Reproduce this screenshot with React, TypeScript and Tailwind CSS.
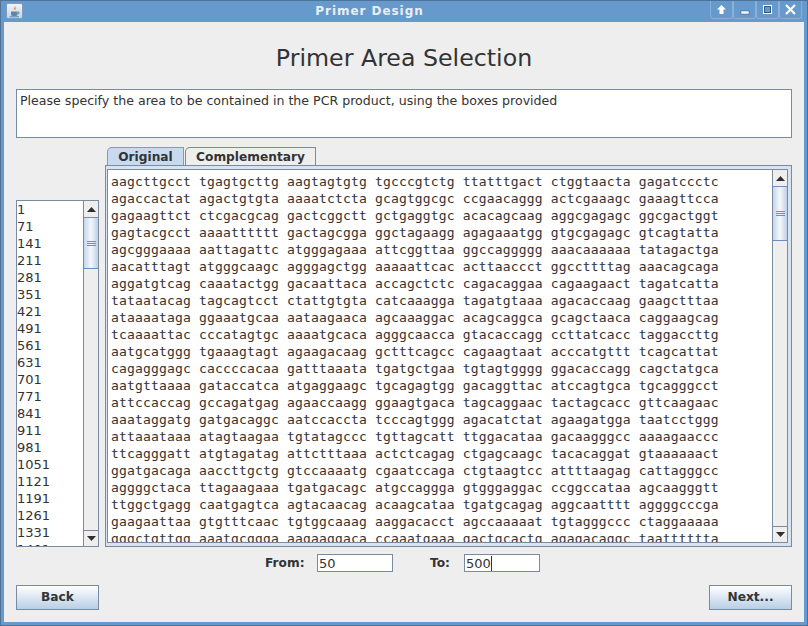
import React from "react";

const seq = `aagcttgcct tgagtgcttg aagtagtgtg tgcccgtctg ttatttgact ctggtaacta gagatccctc
agaccactat agactgtgta aaaatctcta gcagtggcgc ccgaacaggg actcgaaagc gaaagttcca
gagaagttct ctcgacgcag gactcggctt gctgaggtgc acacagcaag aggcgagagc ggcgactggt
gagtacgcct aaaatttttt gactagcgga ggctagaagg agagaaatgg gtgcgagagc gtcagtatta
agcgggaaaa aattagattc atgggagaaa attcggttaa ggccaggggg aaacaaaaaa tatagactga
aacatttagt atgggcaagc agggagctgg aaaaattcac acttaaccct ggccttttag aaacagcaga
aggatgtcag caaatactgg gacaattaca accagctctc cagacaggaa cagaagaact tagatcatta
tataatacag tagcagtcct ctattgtgta catcaaagga tagatgtaaa agacaccaag gaagctttaa
ataaaataga ggaaatgcaa aataagaaca agcaaaggac acagcaggca gcagctaaca caggaagcag
tcaaaattac cccatagtgc aaaatgcaca agggcaacca gtacaccagg ccttatcacc taggaccttg
aatgcatggg tgaaagtagt agaagacaag gctttcagcc cagaagtaat acccatgttt tcagcattat
cagagggagc caccccacaa gatttaaata tgatgctgaa tgtagtgggg ggacaccagg cagctatgca
aatgttaaaa gataccatca atgaggaagc tgcagagtgg gacaggttac atccagtgca tgcagggcct
attccaccag gccagatgag agaaccaagg ggaagtgaca tagcaggaac tactagcacc gttcaagaac
aaataggatg gatgacaggc aatccaccta tcccagtggg agacatctat agaagatgga taatcctggg
attaaataaa atagtaagaa tgtatagccc tgttagcatt ttggacataa gacaagggcc aaaagaaccc
ttcagggatt atgtagatag attctttaaa actctcagag ctgagcaagc tacacaggat gtaaaaaact
ggatgacaga aaccttgctg gtccaaaatg cgaatccaga ctgtaagtcc attttaagag cattagggcc
aggggctaca ttagaagaaa tgatgacagc atgccaggga gtgggaggac ccggccataa agcaagggtt
ttggctgagg caatgagtca agtacaacag acaagcataa tgatgcagag aggcaatttt aggggcccga
gaagaattaa gtgtttcaac tgtggcaaag aaggacacct agccaaaaat tgtagggccc ctaggaaaaa
gggctgttgg aaatgcggga aagaaggaca ccaaatgaaa gactgcactg agagacaggc taatttttta`.split("\n");

const nums = [1,71,141,211,281,351,421,491,561,631,701,771,841,911,981,1051,1121,1191,1261,1331,1401];

const Arrow = ({ up }: { up: boolean }) => (
  <svg width="9" height="5" viewBox="0 0 9 5" className="block">
    <path d={up ? "M4.5 0L9 5H0Z" : "M0 0H9L4.5 5Z"} fill="#2f2f2f" />
  </svg>
);

const Scrollbar = ({ thumbHeight }: { thumbHeight: string }) => (
  <div className="w-[15px] h-full shrink-0 flex flex-col bg-[#eeeeee] border-l border-[#7a8a9f]">
    <div className="h-[16px] shrink-0 flex items-center justify-center bg-[#eeeeee]">
      <Arrow up />
    </div>
    <div className="flex-1 min-h-0 flex flex-col">
      <div className={`${thumbHeight} shrink-0 border-y border-[#6b8fc4] bg-gradient-to-r from-[#c4d6ec] via-[#f5f8fc] to-[#bcd0e8] flex flex-col items-center justify-center gap-[1px]`}>
        <div className="w-[9px] h-[1px] bg-[#6d8fc4]" />
        <div className="w-[9px] h-[1px] bg-[#6d8fc4]" />
        <div className="w-[9px] h-[1px] bg-[#6d8fc4]" />
      </div>
    </div>
    <div className="h-[16px] shrink-0 flex items-center justify-center bg-[#eeeeee] border-t border-[#7a8a9f]">
      <Arrow up={false} />
    </div>
  </div>
);

const WinBtn = ({ children }: { children: React.ReactNode }) => (
  <div className="w-[23px] h-[18px] flex items-center justify-center border-x border-b border-[#88b0d8] rounded-b-[3px]">
    {children}
  </div>
);

const JavaIcon = () => (
  <div className="w-[17px] h-[16px] rounded-[2px] bg-gradient-to-b from-[#f2f4f6] to-[#c9d6e4] border border-[#7f9fc0] flex items-center justify-center">
    <svg width="13" height="14" viewBox="0 0 13 14">
      <path d="M7 1C8 3 5 4 6 6.5C6 5 8.5 4.5 7 1Z" fill="#e8772e" />
      <path d="M8.5 3.5C7 4.5 7 5.5 7.5 6.5C7.5 5.5 8 4.5 8.5 3.5Z" fill="#e8772e" />
      <path d="M3 7.5H9.5V10.5C9.5 11.5 8.5 12 6.25 12C4 12 3 11.5 3 10.5Z" fill="#5d87a8" />
      <path d="M9.5 8H11V9.5L9.5 10" fill="none" stroke="#5d87a8" />
      <path d="M1.5 12.8H11" stroke="#5d87a8" />
    </svg>
  </div>
);

const PrimaryButton = ({ label }: { label: string }) => (
  <div className="w-[83px] h-[25px] flex items-center justify-center border border-[#7a8a9f] bg-gradient-to-b from-[#ffffff] to-[#b8cfe5] text-[12.2px] font-bold text-[#333333]">
    {label}
  </div>
);

export default function App() {
  return (
    <div className="w-[808px] h-[626px] flex flex-col bg-[#eeeeee] overflow-hidden text-[#333333] font-['DejaVu_Sans',sans-serif] border border-[#4f7398]">
      <div className="h-[21px] shrink-0 flex items-start bg-[#6699cc] pl-[5px] pr-[5px]">
        <div className="w-[23px] pt-[2px]"><JavaIcon /></div>
        <div className="flex-1 text-center text-[12px] leading-[21px] font-bold text-[#e8eef5] tracking-[0.95px]">Primer Design</div>
        <div className="flex h-[18px]">
          <WinBtn>
            <svg width="11" height="11" viewBox="0 0 11 11"><path d="M5.5 1L10 5.5H7.5V10H3.5V5.500H1Z" fill="#ffffff" /></svg>
          </WinBtn>
          <WinBtn>
            <svg width="11" height="11" viewBox="0 0 11 11"><rect x="2" y="7" width="8" height="3" fill="#ffffff" stroke="#2f5b87" strokeWidth="0.5" /></svg>
          </WinBtn>
          <WinBtn>
            <svg width="11" height="11" viewBox="0 0 11 11"><rect x="1.5" y="1.5" width="8" height="8" fill="none" stroke="#ffffff" strokeWidth="1" /><rect x="2.5" y="2.5" width="6" height="6" fill="none" stroke="#2f5b87" strokeWidth="1" /></svg>
          </WinBtn>
          <WinBtn>
            <svg width="11" height="11" viewBox="0 0 11 11"><path d="M1 1L10 10M10 1L1 10" stroke="#ffffff" strokeWidth="2.2" /></svg>
          </WinBtn>
        </div>
      </div>

      <div className="flex-1 min-h-0 flex flex-col border-x-[3px] border-b-[3px] border-[#6699cc] px-[12px]">
        <div className="h-[67px] shrink-0 flex items-center justify-center text-[23.7px] text-[#333333] pt-[6px]">Primer Area Selection</div>

        <div className="h-[49px] shrink-0 bg-white border border-[#7a8a9f] px-[3px] pt-[2px] text-[12.6px] leading-[18px]">
          Please specify the area to be contained in the PCR product, using the boxes provided
        </div>

        <div className="flex mt-[9px]">
          <div className="w-[83px] shrink-0 flex flex-col pt-[53px] mr-[6px]">
            <div className="h-[347px] bg-white border border-[#7a8a9f] flex overflow-hidden">
              <div className="flex-1 overflow-hidden text-[13px] leading-[17px]">
                {nums.map((n) => (
                  <div key={n} className="h-[17px]">{n}</div>
                ))}
              </div>
              <Scrollbar thumbHeight="h-[52px]" />
            </div>
          </div>

          <div className="flex-1 min-w-0 flex flex-col">
            <div className="h-[18px] shrink-0 flex items-end pl-[2px] gap-[1px]">
              <div className="h-[18px] w-[77px] flex items-center justify-center pt-[1px] bg-[#c8daf0] border border-b-0 border-[#7a9cc8] rounded-tl-[5px] text-[12.2px] font-bold text-[#333333]">Original</div>
              <div className="h-[18px] w-[131px] flex items-center justify-center pt-[1px] bg-[#eeeeee] border border-b-0 border-[#7a8a9f] rounded-tl-[5px] text-[12.2px] font-bold text-[#333333]">Complementary</div>
            </div>
            <div className="h-[382px] shrink-0 border border-[#7a8a9f] pl-[1px] pt-[3px] pr-[3px] pb-[3px] bg-[#d8e3f1]">
              <div className="h-full border border-[#7a8a9f] bg-white flex overflow-hidden">
                <div className="flex-1 min-w-0 overflow-hidden pl-[3px] pt-[3px] font-['DejaVu_Sans_Mono',monospace] text-[13px] leading-[17px] tracking-[0.17px] whitespace-pre">
                  {seq.map((l, i) => (
                    <div key={i} className="h-[17px]">{l}</div>
                  ))}
                </div>
                <Scrollbar thumbHeight="h-[55px]" />
              </div>
            </div>
          </div>
        </div>

        <div className="h-[38px] shrink-0 flex items-start pt-[7px] pl-[249px] text-[13px]">
          <span className="w-[52px] font-bold text-[12.2px] leading-[18px]">From:</span>
          <div className="w-[76px] h-[18px] bg-white border border-[#7a8a9f] pl-[1px] leading-[17px] text-[13px]">50</div>
          <span className="w-[71px] pl-[37px] font-bold text-[12.2px] leading-[18px]">To:</span>
          <div className="w-[76px] h-[18px] bg-white border border-[#7a8a9f] pl-[1px] leading-[17px] text-[13px] flex">
            <span>500</span>
            <span className="w-[1px] h-[15px] mt-[1px] bg-[#333333]" />
          </div>
        </div>

        <div className="h-[25px] shrink-0 flex justify-between">
          <PrimaryButton label="Back" />
          <PrimaryButton label="Next..." />
        </div>
      </div>
    </div>
  );
}
